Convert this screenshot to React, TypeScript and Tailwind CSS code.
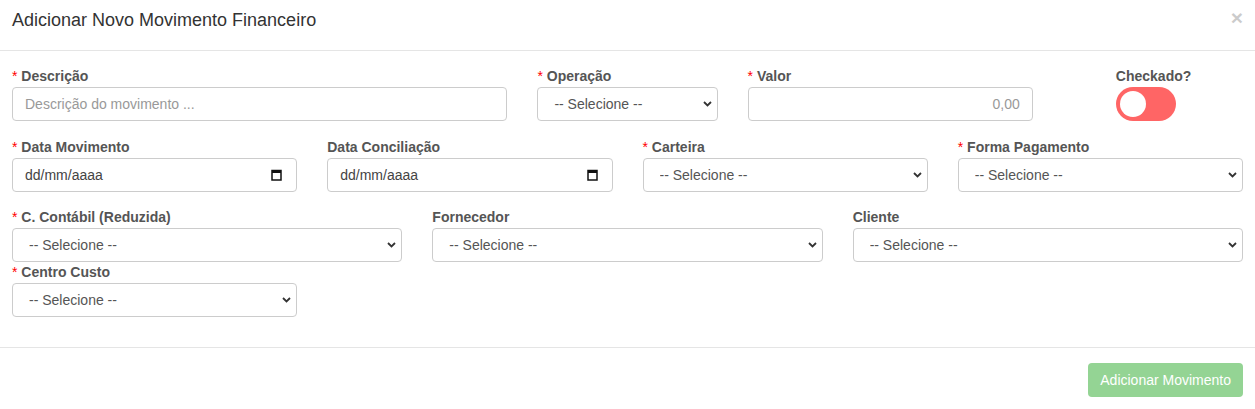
import * as React from 'react';

const font = { fontFamily: '"Liberation Sans", Arial, Helvetica, sans-serif' };

function Label({ text, required = true }: { text: string; required?: boolean }) {
    return (
        <label className="block h-[21px] text-[14px] leading-[21px] font-bold text-[#555] whitespace-nowrap">
            {required && <span className="text-[#ff0000] font-normal">* </span>}
            {text}
        </label>
    );
}

function Select({ value = '-- Selecione --' }: { value?: string }) {
    return (
        <div className="relative">
            <select
                defaultValue={value}
                className="block w-full h-[34px] appearance-none border border-[#ccc] rounded-[4px] bg-white pl-4 pr-8 text-[14px] text-[#555] outline-none"
            >
                <option>{value}</option>
            </select>
            {/* chevron */}
            <svg className="absolute right-[6px] top-[14px] pointer-events-none" width="9" height="6" viewBox="0 0 9 6">
                <path d="M1 1 L4.5 4.5 L8 1" fill="none" stroke="#333" strokeWidth="1.8" />
            </svg>
        </div>
    );
}

function DateField() {
    return (
        <div className="flex items-center justify-between h-[34px] border border-[#ccc] rounded-[4px] bg-white pl-3 pr-[14px] text-[14px] text-[#444]">
            <span>dd/mm/aaaa</span>
            <svg width="11" height="12" viewBox="0 0 11 12">
                <rect x="1" y="1.5" width="9" height="9.5" fill="none" stroke="#111" strokeWidth="1.5" />
                <rect x="1" y="1.5" width="9" height="2.5" fill="#111" />
            </svg>
        </div>
    );
}

export default function App() {
    return (
        <div className="w-[1255px] bg-white" style={font}>
            {/* Header */}
            <div className="flex justify-between items-start h-[51px] border-b border-[#e5e5e5] px-3">
                <h4 className="pt-[10px] text-[18px] leading-[20px] text-[#333]">Adicionar Novo Movimento Financeiro</h4>
                <span className="mt-[7px] text-[21px] leading-[21px] font-bold text-black opacity-20">×</span>
            </div>

            {/* Body */}
            <div className="px-3 pt-[15px] pb-[30px]">
                <div className="grid grid-cols-12 gap-x-[30px] mb-4">
                    <div className="col-span-5">
                        <Label text="Descrição" />
                        <input
                            placeholder="Descrição do movimento ..."
                            className="block w-full h-[34px] border border-[#ccc] rounded-[4px] px-3 text-[14px] text-[#555] placeholder:text-[#999] outline-none"
                        />
                    </div>
                    <div className="col-span-2">
                        <Label text="Operação" />
                        <Select />
                    </div>
                    <div className="col-span-3">
                        <Label text="Valor" />
                        <input
                            placeholder="0,00"
                            className="block w-full h-[34px] border border-[#ccc] rounded-[4px] px-3 text-right text-[14px] text-[#555] placeholder:text-[#999] outline-none"
                        />
                    </div>
                    <div className="col-span-2 pl-[53px]">
                        <Label text="Checkado?" required={false} />
                        <div className="relative w-[60px] h-[34px] rounded-full bg-[#ff6565]">
                            <div className="absolute left-[4px] top-[4px] w-[26px] h-[26px] rounded-full bg-white" />
                        </div>
                    </div>
                </div>

                <div className="grid grid-cols-12 gap-x-[30px] mb-[15px]">
                    <div className="col-span-3">
                        <Label text="Data Movimento" />
                        <DateField />
                    </div>
                    <div className="col-span-3">
                        <Label text="Data Conciliação" required={false} />
                        <DateField />
                    </div>
                    <div className="col-span-3">
                        <Label text="Carteira" />
                        <Select />
                    </div>
                    <div className="col-span-3">
                        <Label text="Forma Pagamento" />
                        <Select />
                    </div>
                </div>

                <div className="grid grid-cols-12 gap-x-[30px]">
                    <div className="col-span-4">
                        <Label text="C. Contábil (Reduzida)" />
                        <Select />
                    </div>
                    <div className="col-span-4">
                        <Label text="Fornecedor" required={false} />
                        <Select />
                    </div>
                    <div className="col-span-4">
                        <Label text="Cliente" required={false} />
                        <Select />
                    </div>
                </div>

                <div className="grid grid-cols-12 gap-x-[30px]">
                    <div className="col-span-3">
                        <Label text="Centro Custo" />
                        <Select />
                    </div>
                </div>
            </div>

            {/* Footer */}
            <div className="flex justify-end border-t border-[#e5e5e5] px-3 pt-[15px] pb-[15px]">
                <button className="h-[34px] px-3 rounded-[4px] bg-[#94d494] text-white text-[14px]">Adicionar Movimento</button>
            </div>
        </div>
    );
}
